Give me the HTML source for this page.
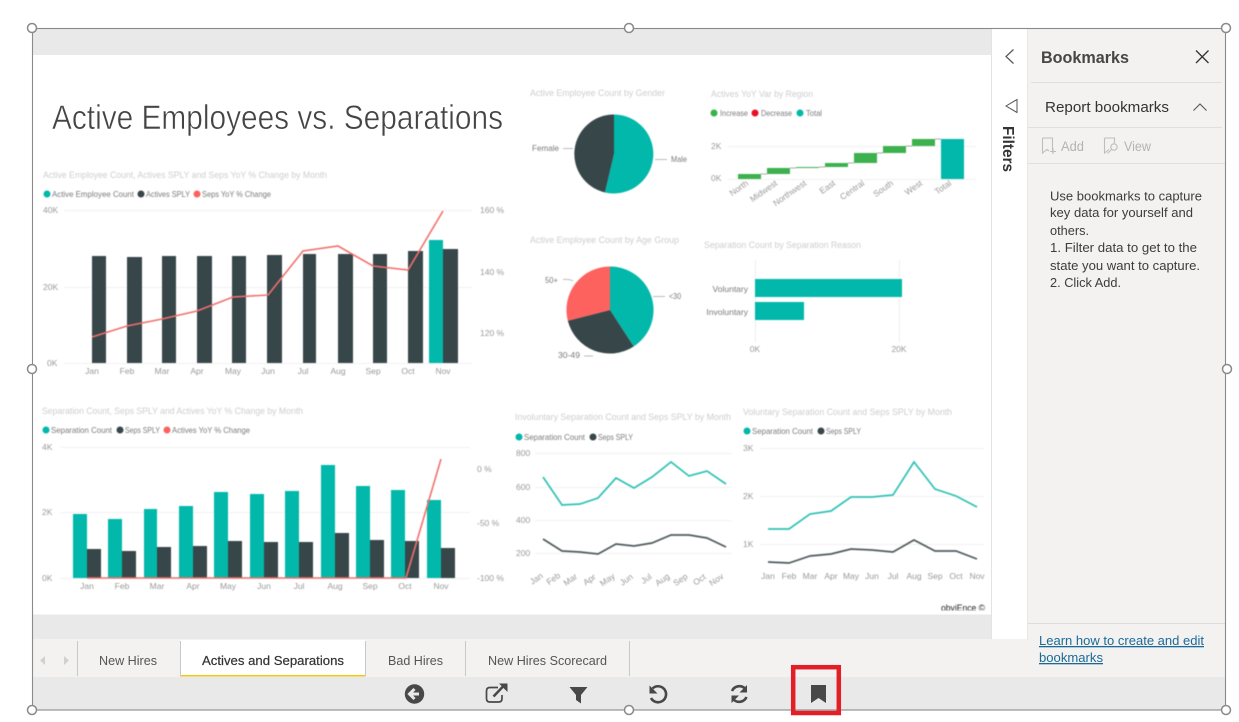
<!DOCTYPE html>
<html lang="en">
<head>
<meta charset="utf-8">
<title>Actives and Separations</title>
<style>
html,body{margin:0;padding:0;background:#fff;width:1239px;height:722px;overflow:hidden}
svg{display:block;font-family:"Liberation Sans",sans-serif}
.t{font-size:9.5px;fill:#cdcdcd}
.l{font-size:8.5px;fill:#7a7a7a}
.a{font-size:8.5px;fill:#999}
.g{stroke:#f2f2f2;stroke-width:1;fill:none}
.m{text-anchor:middle}
.e{text-anchor:end}
.p{font-size:13px;fill:#3c3c3c}
.tab{font-size:13px;fill:#555}
.h{fill:#fff;stroke:#8a8a8a;stroke-width:1.5}
</style>
</head>
<body>
<svg width="1239" height="722" viewBox="0 0 1239 722" xmlns="http://www.w3.org/2000/svg">
<defs><clipPath id="c"><rect x="930" y="590" width="60" height="20.5"/></clipPath></defs>
<rect width="1239" height="722" fill="#fff"/>
<rect x="33" y="29" width="958" height="26" fill="#e9e9e9"/>
<rect x="33" y="614.500" width="958" height="25" fill="#e9e9e9"/>
<rect x="1027" y="29" width="199" height="611" fill="#f3f2f1"/>
<rect x="991" y="29" width="1" height="611" fill="#e3e3e3"/>
<rect x="33" y="639" width="1193" height="38" fill="#f3f2f1"/>
<rect x="1027" y="623" width="199" height="54" fill="#f3f2f1"/>
<rect x="1027" y="29" width="1" height="611" fill="#e6e6e6"/>
<rect x="33" y="677" width="1193" height="33" fill="#e9e9e9"/>

<text x="52" y="129" font-size="34" fill="#444" stroke="#fff" stroke-width=".55" textLength="451" lengthAdjust="spacingAndGlyphs">Active Employees vs. Separations</text>

<g style="filter:blur(.45px)">
<!-- Chart 1 -->
<text class="t" x="43" y="178" textLength="284" lengthAdjust="spacingAndGlyphs">Active Employee Count, Actives SPLY and Seps YoY % Change by Month</text>
<circle cx="47" cy="194" r="3.500" fill="#01b8aa"/><text class="l" x="52" y="197" textLength="82" lengthAdjust="spacingAndGlyphs">Active Employee Count</text>
<circle cx="141" cy="194" r="3.500" fill="#374649"/><text class="l" x="146" y="197" textLength="44" lengthAdjust="spacingAndGlyphs">Actives SPLY</text>
<circle cx="197" cy="194" r="3.500" fill="#fd625e"/><text class="l" x="202" y="197" textLength="69" lengthAdjust="spacingAndGlyphs">Seps YoY % Change</text>
<path class="g" d="M64 210.500H472M64 287.500H472M64 363.500H472"/>
<text class="a" x="43" y="213">40K</text><text class="a" x="43" y="290">20K</text><text class="a" x="47" y="366">0K</text>
<text class="a" x="480" y="213">160 %</text><text class="a" x="480" y="275">140 %</text><text class="a" x="480" y="336">120 %</text>
<g fill="#374649">
<rect x="92" y="256" width="14" height="107"/><rect x="127" y="257" width="15" height="106"/><rect x="162" y="256" width="14" height="107"/><rect x="197" y="256" width="15" height="107"/><rect x="232" y="256" width="14" height="107"/><rect x="267" y="255" width="15" height="108"/><rect x="303" y="254" width="13" height="109"/><rect x="338" y="254" width="15" height="109"/><rect x="373" y="254" width="14" height="109"/><rect x="408" y="251" width="15" height="112"/><rect x="443" y="249" width="15" height="114"/>
</g>
<rect x="429" y="240" width="14" height="123" fill="#01b8aa"/>
<polyline fill="none" stroke="#f0706c" stroke-width="1.600" points="92,337 127,326 162,319 197,311 233,297 268,295 303,251 338,246 373,266 408,270 443,211"/>
<g class="a m"><text x="92" y="374">Jan</text><text x="127" y="374">Feb</text><text x="162" y="374">Mar</text><text x="197" y="374">Apr</text><text x="233" y="374">May</text><text x="268" y="374">Jun</text><text x="303" y="374">Jul</text><text x="338" y="374">Aug</text><text x="373" y="374">Sep</text><text x="408" y="374">Oct</text><text x="443" y="374">Nov</text></g>

<!-- Chart 2 -->
<text class="t" x="42" y="414" textLength="261" lengthAdjust="spacingAndGlyphs">Separation Count, Seps SPLY and Actives YoY % Change by Month</text>
<circle cx="46" cy="430" r="3.500" fill="#01b8aa"/><text class="l" x="51" y="433" textLength="61" lengthAdjust="spacingAndGlyphs">Separation Count</text>
<circle cx="120" cy="430" r="3.500" fill="#374649"/><text class="l" x="125" y="433" textLength="35" lengthAdjust="spacingAndGlyphs">Seps SPLY</text>
<circle cx="167" cy="430" r="3.500" fill="#fd625e"/><text class="l" x="172" y="433" textLength="78" lengthAdjust="spacingAndGlyphs">Actives YoY % Change</text>
<path class="g" d="M60 447.500H470M60 512.500H470M60 578.500H470"/>
<text class="a" x="42" y="450">4K</text><text class="a" x="42" y="515">2K</text><text class="a" x="42" y="581">0K</text>
<text class="a" x="477" y="472">0 %</text><text class="a" x="477" y="526">-50 %</text><text class="a" x="477" y="581">-100 %</text>
<g fill="#01b8aa">
<rect x="73" y="514" width="14" height="64"/><rect x="108" y="519" width="14" height="59"/><rect x="144" y="509" width="13" height="69"/><rect x="179" y="506" width="14" height="72"/><rect x="214" y="492" width="14" height="86"/><rect x="250" y="494" width="14" height="84"/><rect x="285" y="491" width="14" height="87"/><rect x="321" y="465" width="14" height="113"/><rect x="356" y="486" width="14" height="92"/><rect x="391" y="490" width="14" height="88"/><rect x="427" y="500" width="14" height="78"/>
</g>
<g fill="#374649">
<rect x="87" y="549" width="14" height="29"/><rect x="122" y="551" width="14" height="27"/><rect x="157" y="547" width="14" height="31"/><rect x="193" y="546" width="14" height="32"/><rect x="228" y="541" width="14" height="37"/><rect x="264" y="542" width="14" height="36"/><rect x="299" y="542" width="14" height="36"/><rect x="335" y="533" width="14" height="45"/><rect x="370" y="540" width="14" height="38"/><rect x="405" y="541" width="14" height="37"/><rect x="441" y="548" width="14" height="30"/>
</g>
<polyline fill="none" stroke="#f0706c" stroke-width="1.600" points="87,578 406,578 441,459"/>
<g class="a m"><text x="87" y="589">Jan</text><text x="122" y="589">Feb</text><text x="157" y="589">Mar</text><text x="193" y="589">Apr</text><text x="228" y="589">May</text><text x="264" y="589">Jun</text><text x="299" y="589">Jul</text><text x="335" y="589">Aug</text><text x="370" y="589">Sep</text><text x="405" y="589">Oct</text><text x="441" y="589">Nov</text></g>

<!-- Gender pie -->
<text class="t" x="530" y="96" textLength="135" lengthAdjust="spacingAndGlyphs">Active Employee Count by Gender</text>
<path d="M614 154L605 192.500A39.500 39.500 0 0 1 614 114.500Z" fill="#374649"/>
<path d="M614 154L614 114.500A39.500 39.500 0 1 1 605 192.500Z" fill="#01b8aa"/>
<path d="M563 148.500H573M655 159.500H667" stroke="#bbb" fill="none"/>
<text class="l" x="532" y="151" textLength="27" lengthAdjust="spacingAndGlyphs">Female</text>
<text class="l" x="671" y="162" textLength="16" lengthAdjust="spacingAndGlyphs">Male</text>

<!-- Waterfall -->
<text class="t" x="711" y="97" textLength="102" lengthAdjust="spacingAndGlyphs">Actives YoY Var by Region</text>
<circle cx="714" cy="113" r="3.500" fill="#37b34a"/><text class="l" x="720" y="116" textLength="28" lengthAdjust="spacingAndGlyphs">Increase</text>
<circle cx="755" cy="113" r="3.500" fill="#e81123"/><text class="l" x="761" y="116" textLength="31" lengthAdjust="spacingAndGlyphs">Decrease</text>
<circle cx="800" cy="113" r="3.500" fill="#01b8aa"/><text class="l" x="806" y="116" textLength="16" lengthAdjust="spacingAndGlyphs">Total</text>
<path class="g" d="M728 146.500H976M728 179.500H976"/>
<text class="a" x="711" y="149">2K</text><text class="a" x="711" y="181">0K</text>
<path d="M761 174H767M790 168H796M819 167H825M848 163H854M877 153H883M906 146H912M935 139H941" stroke="#aaa" fill="none"/>
<g fill="#3cb14e">
<rect x="738" y="174" width="23" height="5"/><rect x="767" y="168" width="23" height="6"/><rect x="796" y="167" width="23" height="1"/><rect x="825" y="163" width="23" height="4"/><rect x="854" y="153" width="23" height="10"/><rect x="883" y="146" width="23" height="7"/><rect x="912" y="139" width="23" height="7"/>
</g>
<rect x="941" y="139" width="23" height="40" fill="#01b8aa"/>
<g class="a e">
<text transform="translate(749 184.500) rotate(-35)">North</text>
<text transform="translate(778 184.500) rotate(-35)">Midwest</text>
<text transform="translate(807 184.500) rotate(-35)">Northwest</text>
<text transform="translate(836 184.500) rotate(-35)">East</text>
<text transform="translate(865 184.500) rotate(-35)">Central</text>
<text transform="translate(894 184.500) rotate(-35)">South</text>
<text transform="translate(923 184.500) rotate(-35)">West</text>
<text transform="translate(952 184.500) rotate(-35)">Total</text>
</g>

<!-- Age pie -->
<text class="t" x="530" y="243" textLength="149" lengthAdjust="spacingAndGlyphs">Active Employee Count by Age Group</text>
<path d="M610 310L610 266.500A43.500 43.500 0 0 1 633.700 346.500Z" fill="#01b8aa"/>
<path d="M610 310L633.700 346.500A43.500 43.500 0 0 1 567.800 320.800Z" fill="#374649"/>
<path d="M610 310L567.800 320.800A43.500 43.500 0 0 1 610 266.500Z" fill="#fd625e"/>
<path d="M563 279.500Q570 279 573 281M653 296.500H665M584 356H593" stroke="#bbb" fill="none"/>
<text class="l" x="545" y="283" textLength="13" lengthAdjust="spacingAndGlyphs">50+</text>
<text class="l" x="669" y="299" textLength="12" lengthAdjust="spacingAndGlyphs">&lt;30</text>
<text class="l" x="558" y="358" textLength="22" lengthAdjust="spacingAndGlyphs">30-49</text>

<!-- Reason bars -->
<text class="t" x="704" y="248" textLength="157" lengthAdjust="spacingAndGlyphs">Separation Count by Separation Reason</text>
<path d="M755.500 260V342M899.500 260V342" stroke="#ececec" fill="none"/>
<rect x="755" y="279" width="147" height="18" fill="#01b8aa"/>
<rect x="755" y="302" width="49" height="18" fill="#01b8aa"/>
<text class="l e" x="748" y="292">Voluntary</text><text class="l e" x="748" y="315">Involuntary</text>
<text class="a m" x="755" y="352">0K</text><text class="a m" x="899" y="352">20K</text>

<!-- Line 1 -->
<text class="t" x="515" y="420" textLength="216" lengthAdjust="spacingAndGlyphs">Involuntary Separation Count and Seps SPLY by Month</text>
<circle cx="519" cy="437" r="3.500" fill="#01b8aa"/><text class="l" x="524" y="440" textLength="61" lengthAdjust="spacingAndGlyphs">Separation Count</text>
<circle cx="593" cy="437" r="3.500" fill="#374649"/><text class="l" x="598" y="440" textLength="35" lengthAdjust="spacingAndGlyphs">Seps SPLY</text>
<path class="g" d="M535 453.500H732M535 487.500H732M535 520.500H732M535 553.500H732"/>
<text class="a" x="516" y="456">800</text><text class="a" x="516" y="490">600</text><text class="a" x="516" y="523">400</text><text class="a" x="516" y="556">200</text>
<polyline fill="none" stroke="#2fc1b5" stroke-width="1.700" points="543,477 562,505 580,504 598,498 616,478 634,488 652,477 671,462 689,476 707,471 726,484"/>
<polyline fill="none" stroke="#4e5a5c" stroke-width="1.700" points="543,539 562,551 580,552 598,554 616,544 634,546 652,543 671,535 689,535 707,538 726,547"/>
<g class="a m">
<text transform="translate(538 581) rotate(-35)">Jan</text><text transform="translate(555 581) rotate(-35)">Feb</text><text transform="translate(572 582) rotate(-35)">Mar</text><text transform="translate(591 582) rotate(-35)">Apr</text><text transform="translate(609 582) rotate(-35)">May</text><text transform="translate(628 582) rotate(-35)">Jun</text><text transform="translate(648 581) rotate(-35)">Jul</text><text transform="translate(664 582) rotate(-35)">Aug</text><text transform="translate(682 582) rotate(-35)">Sep</text><text transform="translate(701 582) rotate(-35)">Oct</text><text transform="translate(718 582) rotate(-35)">Nov</text>
</g>

<!-- Line 2 -->
<text class="t" x="743" y="415" textLength="209" lengthAdjust="spacingAndGlyphs">Voluntary Separation Count and Seps SPLY by Month</text>
<circle cx="747" cy="431" r="3.500" fill="#01b8aa"/><text class="l" x="752" y="434" textLength="61" lengthAdjust="spacingAndGlyphs">Separation Count</text>
<circle cx="821" cy="431" r="3.500" fill="#374649"/><text class="l" x="826" y="434" textLength="35" lengthAdjust="spacingAndGlyphs">Seps SPLY</text>
<path class="g" d="M760 448.500H984M760 496.500H984M760 544.500H984"/>
<text class="a" x="743" y="451">3K</text><text class="a" x="743" y="499">2K</text><text class="a" x="743" y="547">1K</text>
<polyline fill="none" stroke="#2fc1b5" stroke-width="1.700" points="768,529 789,529 810,514 831,511 851,497 872,497 893,495 914,462 935,489 956,496 977,507"/>
<polyline fill="none" stroke="#4e5a5c" stroke-width="1.700" points="768,562 789,563 810,556 831,554 851,549 872,550 893,552 914,540 935,551 956,551 977,559"/>
<g class="a m"><text x="768" y="579">Jan</text><text x="789" y="579">Feb</text><text x="810" y="579">Mar</text><text x="831" y="579">Apr</text><text x="851" y="579">May</text><text x="872" y="579">Jun</text><text x="893" y="579">Jul</text><text x="914" y="579">Aug</text><text x="935" y="579">Sep</text><text x="956" y="579">Oct</text><text x="977" y="579">Nov</text></g>
<g clip-path="url(#c)"><text x="941" y="611" font-size="9" fill="#222" textLength="44" lengthAdjust="spacingAndGlyphs">obviEnce ©</text></g>
</g>

<!-- Filter strip -->
<path d="M1013.500 49.500L1006 56.500L1013.500 63.500" fill="none" stroke="#555" stroke-width="1.200"/>
<path d="M1006 106L1017 99.500V112.500Z" fill="none" stroke="#555" stroke-width="1"/>
<text transform="translate(1003 126) rotate(90)" font-size="16" font-weight="700" fill="#333" textLength="46" lengthAdjust="spacingAndGlyphs">Filters</text>

<!-- Bookmarks pane -->
<text x="1041" y="63" font-size="17" font-weight="700" fill="#484644" textLength="88" lengthAdjust="spacingAndGlyphs">Bookmarks</text>
<path d="M1196 50.500L1208.500 63M1208.500 50.500L1196 63" stroke="#333" stroke-width="1.300" fill="none"/>
<path d="M1031 82.500H1222M1028 127.500H1222M1028 163.500H1226" stroke="#e1dfdd" fill="none"/>
<text x="1045" y="112" font-size="15" fill="#333" textLength="124" lengthAdjust="spacingAndGlyphs">Report bookmarks</text>
<path d="M1193.500 110.500L1200 104L1206.500 110.500" fill="none" stroke="#555" stroke-width="1.100"/>
<path d="M1042.500 138H1052.500V152.500M1042.500 138V153L1047 149.500L1049 151M1050 151.500H1056M1053 148.500V154" fill="none" stroke="#bdbdbd" stroke-width="1.100"/>
<text x="1061" y="151" font-size="13.500" fill="#b3b3b3" textLength="23" lengthAdjust="spacingAndGlyphs">Add</text>
<path d="M1104.500 138H1114.500V143M1104.500 138V153L1109 149.500" fill="none" stroke="#bdbdbd" stroke-width="1.100"/>
<circle cx="1114" cy="147" r="3.200" fill="none" stroke="#bdbdbd" stroke-width="1.100"/>
<path d="M1111.500 149.500L1107.500 153.500" stroke="#bdbdbd" stroke-width="1.100"/>
<text x="1124" y="151" font-size="13.500" fill="#b3b3b3" textLength="27" lengthAdjust="spacingAndGlyphs">View</text>
<text class="p" x="1050" y="200.500" textLength="152" lengthAdjust="spacingAndGlyphs">Use bookmarks to capture</text>
<text class="p" x="1050" y="217" textLength="143" lengthAdjust="spacingAndGlyphs">key data for yourself and</text>
<text class="p" x="1050" y="235" textLength="39" lengthAdjust="spacingAndGlyphs">others.</text>
<text class="p" x="1050" y="252" textLength="147" lengthAdjust="spacingAndGlyphs">1. Filter data to get to the</text>
<text class="p" x="1050" y="270" textLength="150" lengthAdjust="spacingAndGlyphs">state you want to capture.</text>
<text class="p" x="1050" y="287" textLength="71" lengthAdjust="spacingAndGlyphs">2. Click Add.</text>
<path d="M1028 623.500H1226" stroke="#dedcda" fill="none"/>
<text x="1039" y="645" font-size="13" fill="#1b6a96" text-decoration="underline" textLength="165" lengthAdjust="spacingAndGlyphs">Learn how to create and edit</text>
<text x="1039" y="662" font-size="13" fill="#1b6a96" text-decoration="underline" textLength="64" lengthAdjust="spacingAndGlyphs">bookmarks</text>

<!-- Tabs -->
<rect x="180" y="640" width="185.500" height="36" fill="#fff"/>
<rect x="180" y="675" width="185.500" height="1.500" fill="#f2c811"/>
<path d="M77.500 641V676M180.500 641V676M365.500 641V676M465.500 641V676M629.500 641V676" stroke="#c8c8c8" fill="none"/>
<path d="M45 656L40 660.500L45 665ZM64 656L69 660.500L64 665Z" fill="#d0d0d0"/>
<text class="tab" x="99" y="665" textLength="58" lengthAdjust="spacingAndGlyphs">New Hires</text>
<text x="202" y="665" font-size="13" fill="#333" stroke="#333" stroke-width=".2" textLength="142" lengthAdjust="spacingAndGlyphs">Actives and Separations</text>
<text class="tab" x="388" y="665" textLength="55" lengthAdjust="spacingAndGlyphs">Bad Hires</text>
<text class="tab" x="488" y="665" textLength="119" lengthAdjust="spacingAndGlyphs">New Hires Scorecard</text>

<!-- Toolbar icons -->
<circle cx="414.500" cy="694" r="9.700" fill="#484848"/>
<path d="M419 694H410.500M414.500 689L409.500 694L414.500 699" fill="none" stroke="#e9e9e9" stroke-width="3"/>
<path d="M498 687.500H490Q486.500 687.500 486.500 691V698.500Q486.500 702 490 702H498.500Q502 702 502 698.500V695" fill="none" stroke="#484848" stroke-width="1.700"/>
<path d="M493.500 696.500L503 686.500" fill="none" stroke="#484848" stroke-width="2.500"/>
<path d="M499 683.500H507.500V692Z" fill="#484848"/>
<path d="M569.500 687H587.500L581 695V703.500L576 700V695Z" fill="#484848"/>
<path d="M652.500 688.500A8 8 0 1 1 651 698" fill="none" stroke="#484848" stroke-width="2.600"/>
<path d="M649.500 685.500V693.500H657.500Z" fill="#484848"/>
<path d="M732 691A8 8 0 0 1 745 688.500M746.500 697A8 8 0 0 1 733.500 699.500" fill="none" stroke="#484848" stroke-width="2.600"/>
<path d="M747 685V692.500H739.500ZM731.500 703V695.500H739Z" fill="#484848"/>
<path d="M811 685H826V703L818.500 698L811 703Z" fill="#484848"/>

<!-- Frame -->
<rect x="32.500" y="28.500" width="1193" height="681.500" fill="none" stroke="#8a8a8a" stroke-width="1.100"/>
<circle class="h" cx="32" cy="28" r="4.500"/><circle class="h" cx="629" cy="28" r="4.500"/><circle class="h" cx="1226" cy="28" r="4.500"/>
<circle class="h" cx="32" cy="369" r="4.500"/><circle class="h" cx="1227" cy="369" r="4.500"/>
<circle class="h" cx="32" cy="710" r="4.500"/><circle class="h" cx="629" cy="710" r="4.500"/><circle class="h" cx="1226" cy="710" r="4.500"/>

<!-- Red highlight -->
<rect x="793.200" y="667.200" width="45.600" height="45.800" fill="none" stroke="#e31e26" stroke-width="4.500"/>
</svg>
</body>
</html>
